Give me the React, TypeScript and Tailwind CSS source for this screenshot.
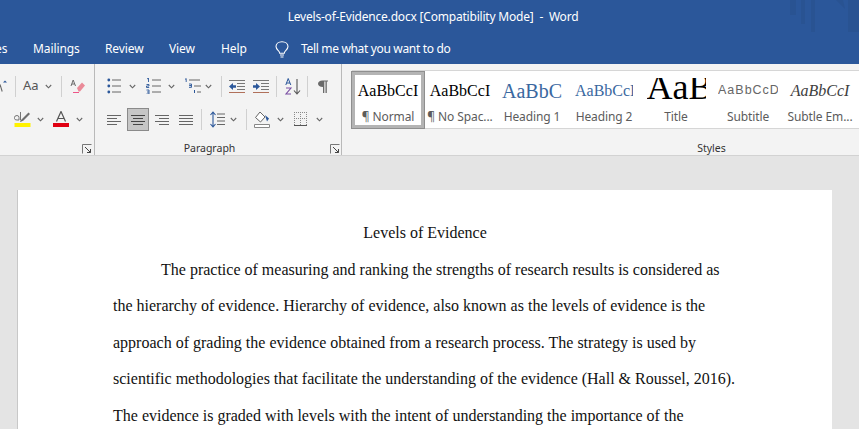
import React from "react";

const Chev = ({ c = "" }: { c?: string }) => (
  <svg width="7" height="5" viewBox="0 0 7 5" className={c}>
    <path d="M0.8 1 L3.5 3.8 L6.2 1" fill="none" stroke="#666" strokeWidth="1.1" />
  </svg>
);

const Launcher = () => (
  <svg width="10" height="10" viewBox="0 0 10 10">
    <path d="M0.5 9.5V0.5H9.5" fill="none" stroke="#777" strokeWidth="1" />
    <path d="M3 3L8.5 8.5M8.5 5v3.5H5" fill="none" stroke="#444" strokeWidth="1" />
  </svg>
);

const Sep = ({ h = "h-[21px]" }: { h?: string }) => <div className={`w-px bg-[#d0d0d0] ${h}`} />;

const Lines = ({ kind }: { kind: "l" | "c" | "r" | "j" }) => {
  const rows: [number, number][] =
    kind === "l"
      ? [[0, 14], [0, 10], [0, 14], [0, 10]]
      : kind === "c"
      ? [[0, 14], [2, 12], [0, 14], [2, 12]]
      : kind === "r"
      ? [[0, 14], [4, 14], [0, 14], [4, 14]]
      : [[0, 14], [0, 14], [0, 14], [0, 14]];
  return (
    <svg width="14" height="11" viewBox="0 0 14 11">
      {rows.map(([a, b], i) => (
        <path key={i} d={`M${a} ${1.5 + i * 3}H${b}`} stroke={kind === "c" ? "#444" : "#666"} strokeWidth="1" />
      ))}
    </svg>
  );
};

const Bullets = () => (
  <svg width="14" height="16" viewBox="0 0 14 16">
    {[2, 8, 14].map((y) => (
      <g key={y}>
        <circle cx="1.8" cy={y} r="1.4" fill="#2b579a" />
        <path d={`M5 ${y}H14`} stroke="#666" />
      </g>
    ))}
  </svg>
);

const Numbers = () => (
  <svg width="15" height="16" viewBox="0 0 15 16">
    {[
      [2, "M1 1l1.5-1v4"],
      [8, "M0.5 6.5h2.5v1.5h-2.5v1.5h2.7"],
      [14, "M0.5 12h2.5v4h-2.5M1 14h2"],
    ].map(([y, d]) => (
      <g key={y as number}>
        <path d={d as string} fill="none" stroke="#2b579a" strokeWidth="0.9" />
        <path d={`M6 ${y}H15`} stroke="#666" />
      </g>
    ))}
  </svg>
);

const Multi = () => (
  <svg width="18" height="16" viewBox="0 0 18 16">
    <path d="M1 1.5l1.2-1v3.5" fill="none" stroke="#2b579a" strokeWidth="0.9" />
    <path d="M5 2H16" stroke="#666" />
    <path d="M5 6h2.5v1.6h-2.2M5.3 7.6h2.2v1.8h-2.5" fill="none" stroke="#2b579a" strokeWidth="0.9" />
    <path d="M10 8H17" stroke="#666" />
    <path d="M10.5 12v3" stroke="#2b579a" strokeWidth="1" />
    <path d="M13 14H17" stroke="#666" />
  </svg>
);

const Indent = ({ out }: { out?: boolean }) => (
  <svg width="16" height="13" viewBox="0 0 16 13">
    <path d="M0 0.5H16M8 3.5H16M8 6.5H16M8 9.5H16" stroke="#777" strokeWidth="1" />
    <path d="M0 12.5H16" stroke="#b0705a" strokeWidth="1" />
    {out ? (
      <path d="M0 6.5L4 3V5.2H7V7.8H4V10Z" fill="#2b579a" />
    ) : (
      <path d="M7 6.5L3 3V5.2H0V7.8H3V10Z" fill="#2b579a" />
    )}
  </svg>
);

const Sort = () => (
  <svg width="16" height="17" viewBox="0 0 16 17">
    <path d="M3.2 0.5L0.8 7M3.2 0.5L5.8 7M1.6 5H5" fill="none" stroke="#2b579a" strokeWidth="1" />
    <path d="M1 10H6L1 16H6" fill="none" stroke="#7a4fa3" strokeWidth="1.1" />
    <path d="M12 1V16M9 12.5L12 16L15 12.5" fill="none" stroke="#555" strokeWidth="1.1" />
  </svg>
);

const Pilcrow = () => (
  <svg width="10" height="13" viewBox="0 0 10 13">
    <path d="M4.5 0.5H10V1.6H8.8V13H7.5V1.6H6.3V13H5V7C1.8 7 0 5.6 0 3.7C0 1.8 1.7 0.5 4.5 0.5Z" fill="#6a6a6a" />
  </svg>
);

const Spacing = () => (
  <svg width="15" height="17" viewBox="0 0 15 17">
    <path d="M3 1V16M0.5 4L3 1L5.5 4M0.5 13L3 16L5.5 13" fill="none" stroke="#2b579a" strokeWidth="1.1" />
    <path d="M7 3H15M7 6.5H15M7 10H15M7 13.5H15" stroke="#666" />
  </svg>
);

const Shading = () => (
  <svg width="16" height="17" viewBox="0 0 16 17">
    <path d="M6 1L1.5 6.5L6.5 11L11 6Z" fill="#fff" stroke="#666" />
    <path d="M11 4L15 7.5L13 10.5Z" fill="#2b579a" />
    <path d="M0.5 13.5H15.5V16.5H0.5Z" fill="#fff" stroke="#888" />
  </svg>
);

const Borders = () => (
  <svg width="13" height="14" viewBox="0 0 13 14">
    <path d="M0 0.5H13M0 6.5H13M0.5 0V13M6.5 0V13M12.5 0V13" fill="none" stroke="#8a8a8a" strokeWidth="1" strokeDasharray="1 1" />
    <path d="M0 13.5H13" stroke="#555" />
  </svg>
);

const Eraser = () => (
  <svg width="15" height="15" viewBox="0 0 15 15">
    <path d="M7 9L12 3.5L15 6.5L10 12.5L8.5 12.5Z" fill="#ea8a98" />
    <path d="M3 13.5H9" stroke="#e58" strokeWidth="1" />
    <path d="M1 7L3.2 1L5.5 7M2 5H4.6" fill="none" stroke="#6a6a6a" strokeWidth="1" />
  </svg>
);

const Highlighter = () => (
  <svg width="17" height="16" viewBox="0 0 17 16">
    <path d="M0.5 6.5Q0.5 4.5 3 4.5Q5 4.5 5 6.5V9H3Q0.5 9 0.5 7.5ZM6.5 1V9" fill="none" stroke="#666" strokeWidth="0.9" />
    <path d="M6 10L8 8L14.5 1.5L16 3L9.5 9.5L6.5 11Z" fill="#6e6e6e" />
    <rect x="0.5" y="12" width="16" height="4" fill="#fff200" />
  </svg>
);

const FontColor = () => (
  <svg width="16" height="16" viewBox="0 0 16 16">
    <path d="M3.5 10.5L8 0.5L12.5 10.5M5 7.5H11" fill="none" stroke="#555" strokeWidth="1.2" />
    <rect x="0" y="12" width="16" height="4" fill="#e00012" />
  </svg>
);

const GrowFragment = () => (
  <svg width="8" height="12" viewBox="0 0 8 12">
    <path d="M0 4.5L2.2 11.5" fill="none" stroke="#666" strokeWidth="1.1" />
    <path d="M3 2.5L5 0.5L7 2.5Z" fill="#2b579a" />
  </svg>
);

const Bulb = () => (
  <svg width="14" height="17" viewBox="0 0 14 17">
    <path d="M4.7 12.2C4.7 9.8 1 8.8 1 5.6C1 2.8 3.5 0.7 7 0.7C10.5 0.7 13 2.8 13 5.6C13 8.8 9.3 9.8 9.3 12.2Z" fill="none" stroke="#fff" strokeWidth="1.1" />
    <path d="M5 14H9M5.5 16H8.5" stroke="#fff" strokeWidth="1.1" />
  </svg>
);

const TitleArt = () => (
  <svg width="85" height="33" viewBox="0 0 85 33" className="absolute right-0 top-0">
    <g fill="#295392">
      <rect x="16" y="0" width="6" height="15" />
      <rect x="27" y="0" width="4" height="24" />
      <rect x="37" y="0" width="4" height="32" />
      <path d="M62 0h7l2 9z" />
      <rect x="74" y="0" width="11" height="32" />
    </g>
  </svg>
);

const SERIF = "[font-family:Liberation_Serif,serif]";

export default function App() {
  const para = [
    "The practice of measuring and ranking the strengths of research results is considered as",
    "the hierarchy of evidence. Hierarchy of evidence, also known as the levels of evidence is the",
    "approach of grading the evidence obtained from a research process. The strategy is used by",
    "scientific methodologies that facilitate the understanding of the evidence (Hall & Roussel, 2016).",
    "The evidence is graded with levels with the intent of understanding the importance of the",
  ];
  return (
    <div className="flex h-[429px] w-[859px] flex-col overflow-hidden bg-[#e4e4e4] [font-family:Noto_Sans,sans-serif]">
      <header className="relative flex h-[64px] shrink-0 flex-col bg-[#2b579a] text-white">
        <TitleArt />
        <div className="flex h-[32px] items-center justify-center pl-[7px] pt-[1px] text-[12px] tracking-[-0.2px]">
          Levels-of-Evidence.docx [Compatibility Mode]&nbsp; -&nbsp; Word
        </div>
        <nav className="flex h-[32px] items-center pt-[2px] text-[12px] tracking-[-0.1px]">
          <span className="ml-[-54px] w-[87px]">References</span>
          <span className="w-[72px]">Mailings</span>
          <span className="w-[64px]">Review</span>
          <span className="w-[52px]">View</span>
          <span className="w-[54px]">Help</span>
          <Bulb />
          <span className="ml-[12px] tracking-[-0.33px]">Tell me what you want to do</span>
        </nav>
      </header>

      <section className="flex h-[92px] shrink-0 border-b border-[#d2d2d2] bg-[#f3f3f3]">
        {/* Font group */}
        <div className="relative h-full w-[95px] shrink-0 border-r border-[#b9b9b9]">
          <div className="flex h-[33px] items-center pt-[11px]">
            <GrowFragment />
            <div className="ml-[7px]"><Sep /></div>
            <span className="ml-[7px] text-[13px] text-[#555]">Aa</span>
            <Chev c="ml-[6px]" />
            <div className="ml-[9px]"><Sep /></div>
            <div className="ml-[8px]"><Eraser /></div>
          </div>
          <div className="mt-[7px] flex h-[30px] items-center">
            <div className="ml-[14px]"><Highlighter /></div>
            <Chev c="ml-[6px]" />
            <div className="ml-[9px]"><FontColor /></div>
            <Chev c="ml-[7px]" />
          </div>
          <div className="absolute bottom-[1px] right-[2px]"><Launcher /></div>
        </div>

        {/* Paragraph group */}
        <div className="relative h-full w-[247px] shrink-0 border-r border-[#b9b9b9]">
          <div className="flex h-[33px] items-center pl-[12px] pt-[11px]">
            <Bullets />
            <Chev c="ml-[8px]" />
            <div className="ml-[10px]"><Numbers /></div>
            <Chev c="ml-[7px]" />
            <div className="ml-[9px]"><Multi /></div>
            <Chev c="ml-[3px]" />
            <div className="ml-[9px]"><Sep /></div>
            <div className="ml-[7px]"><Indent out /></div>
            <div className="ml-[8px]"><Indent /></div>
            <div className="ml-[7px]"><Sep /></div>
            <div className="ml-[8px]"><Sort /></div>
            <div className="ml-[6px]"><Sep /></div>
            <div className="ml-[10px]"><Pilcrow /></div>
          </div>
          <div className="mt-[7px] flex h-[30px] items-center pl-[12px]">
            <Lines kind="l" />
            <div className="ml-[6px] flex h-[23px] w-[22px] items-center justify-center border border-[#8a8a8a] bg-[#c6c6c6]"><Lines kind="c" /></div>
            <div className="ml-[6px]"><Lines kind="r" /></div>
            <div className="ml-[10px]"><Lines kind="j" /></div>
            <div className="ml-[8px]"><Sep /></div>
            <div className="ml-[8px]"><Spacing /></div>
            <Chev c="ml-[5px]" />
            <div className="ml-[9px]"><Sep /></div>
            <div className="ml-[7px]"><Shading /></div>
            <Chev c="ml-[7px]" />
            <div className="ml-[10px]"><Borders /></div>
            <Chev c="ml-[9px]" />
          </div>
          <div className="absolute bottom-0 left-0 right-0 pr-[17px] text-center text-[10.5px] leading-[14px] text-[#333]">Paragraph</div>
          <div className="absolute bottom-[1px] right-[1px]"><Launcher /></div>
        </div>

        {/* Styles group */}
        <div className="relative h-full min-w-0 flex-1">
          <div className="ml-[10px] mt-[6px] flex h-[59px] border-y border-[#d6d6d6] bg-white">
            {/* Normal */}
            <div className="mt-[1px] flex h-[56px] w-[72px] shrink-0 flex-col items-center border-[3px] border-[#b4b4b4] outline-1 outline-[#8f8f8f]">
              <div className={`mt-[-4px] flex h-[39px] items-center whitespace-nowrap text-[16px] leading-none text-black ${SERIF}`}>AaBbCcI</div>
              <div className="mt-[-1px] text-[12px] leading-[16px] whitespace-nowrap text-[#5c5c5c] tracking-[-0.1px]">¶ Normal</div>
            </div>
            {/* No Spacing */}
            <div className="flex w-[72px] shrink-0 flex-col items-center">
              <div className={`flex h-[39px] items-center whitespace-nowrap text-[16px] leading-none text-black ${SERIF}`}>AaBbCcI</div>
              <div className="mt-[-1px] text-[12px] leading-[16px] whitespace-nowrap text-[#5c5c5c] tracking-[-0.1px]">¶ No Spac...</div>
            </div>
            {/* Heading 1 */}
            <div className="flex w-[72px] shrink-0 flex-col items-center">
              <div className={`flex h-[39px] items-center whitespace-nowrap text-[20px] leading-none text-[#3a689f] ${SERIF}`}>AaBbC</div>
              <div className="mt-[-1px] text-[12px] leading-[16px] whitespace-nowrap text-[#5c5c5c] tracking-[-0.1px]">Heading 1</div>
            </div>
            {/* Heading 2 */}
            <div className="flex w-[72px] shrink-0 flex-col items-center">
              <div className={`flex h-[39px] w-[58px] items-center overflow-hidden whitespace-nowrap text-[16px] leading-none text-[#3a689f] ${SERIF}`}>AaBbCcI</div>
              <div className="mt-[-1px] text-[12px] leading-[16px] whitespace-nowrap text-[#5c5c5c] tracking-[-0.1px]">Heading 2</div>
            </div>
            {/* Title */}
            <div className="flex w-[72px] shrink-0 flex-col items-center">
              <div className={`mb-[8px] mt-[7px] h-[24px] w-[59px] overflow-hidden whitespace-nowrap text-[36px] leading-none text-black ${SERIF}`}>
                <div className="mt-[-9px]">AaB</div>
              </div>
              <div className="mt-[-1px] text-[12px] leading-[16px] whitespace-nowrap text-[#5c5c5c] tracking-[-0.1px]">Title</div>
            </div>
            {/* Subtitle */}
            <div className="flex w-[72px] shrink-0 flex-col items-center">
              <div className="flex h-[39px] w-[60px] items-center overflow-hidden whitespace-nowrap text-[12.5px] leading-none tracking-[1px] text-[#666] [font-family:Liberation_Sans,sans-serif]">AaBbCcD</div>
              <div className="mt-[-1px] text-[12px] leading-[16px] whitespace-nowrap text-[#5c5c5c] tracking-[-0.1px]">Subtitle</div>
            </div>
            {/* Subtle Emphasis */}
            <div className="flex w-[72px] shrink-0 flex-col items-center">
              <div className={`flex h-[39px] items-center whitespace-nowrap text-[16px] italic leading-none text-[#404040] ${SERIF}`}>AaBbCcI</div>
              <div className="mt-[-1px] text-[12px] leading-[16px] whitespace-nowrap text-[#5c5c5c] tracking-[-0.1px]">Subtle Em...</div>
            </div>
          </div>
          <div className="absolute bottom-0 left-0 right-0 pl-[222px] text-center text-[10.5px] leading-[14px] text-[#333]">Styles</div>
        </div>
      </section>

      <main className="flex flex-1 flex-col overflow-hidden pl-[18px] pt-[34px]">
        <article className={`h-[260px] w-[814px] bg-white pl-[95px] pt-[32px] text-[16px] text-[#111] shadow-[-1px_0_0_#c8c8c8] ${SERIF}`}>
          <div className="h-[22px] pr-[95px] text-center leading-[22px]">Levels of Evidence</div>
          {para.map((t, i) => (
            <p key={i} className={`mt-[14.5px] h-[22px] whitespace-nowrap leading-[22px] ${i === 0 ? "pl-[48px]" : ""}`}>
              {t}
            </p>
          ))}
        </article>
      </main>
    </div>
  );
}
